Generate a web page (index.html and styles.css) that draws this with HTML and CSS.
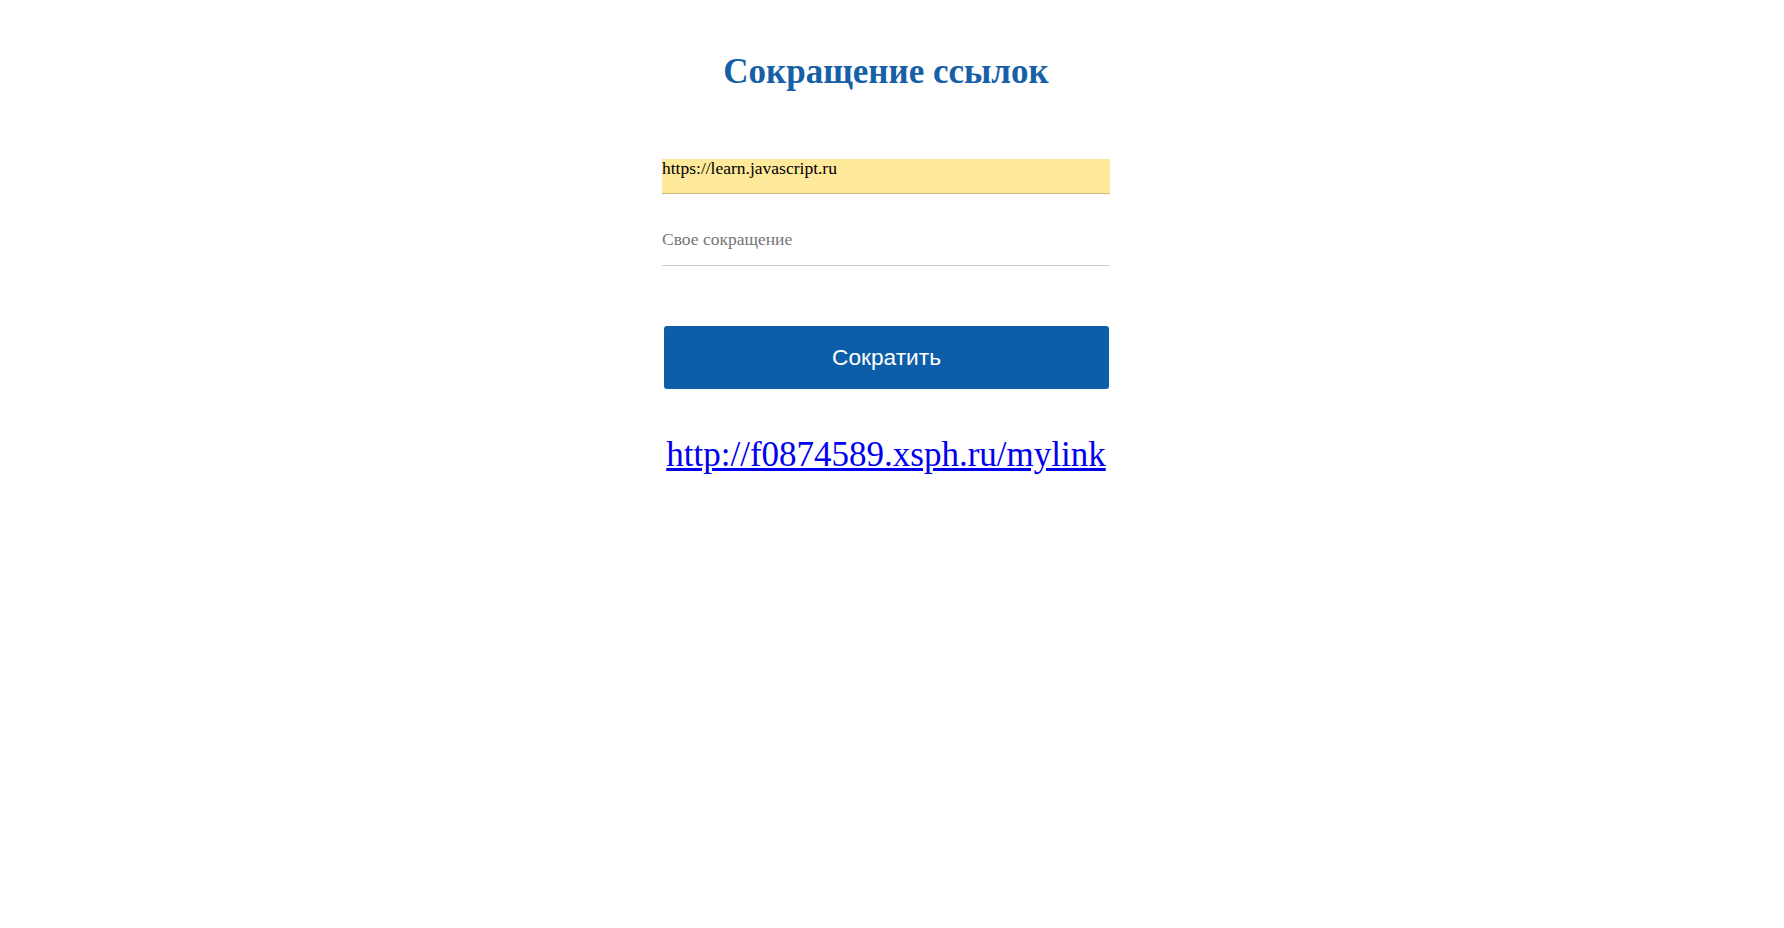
FILE: index.html
```html
<!DOCTYPE html>
<html lang="ru">
<head>
<meta charset="utf-8">
<title>Сокращение ссылок</title>
<link rel="stylesheet" href="styles.css">
</head>
<body>
<div class="page">
  <main class="wrap">
    <h1 class="title">Сокращение ссылок</h1>
    <form class="form">
      <input class="field field-url" type="text" value="https://learn.javascript.ru">
      <input class="field field-alias" type="text" placeholder="Свое сокращение">
      <button class="btn" type="button">Сократить</button>
    </form>
    <div class="result"><a class="result-link" href="#">http://f0874589.xsph.ru/mylink</a></div>
  </main>
</div>
</body>
</html>
```
FILE: styles.css
```css
html, body {
  margin: 0;
  padding: 0;
  background: #ffffff;
}
.page {
  display: flex;
  justify-content: center;
  padding-right: 12px;
  font-family: "Liberation Serif", "Times New Roman", serif;
}
.wrap {
  width: 448px;
  display: flex;
  flex-direction: column;
  align-items: stretch;
}
.title {
  margin: 48px 0 0 0;
  font-size: 35px;
  line-height: 48px;
  font-weight: bold;
  color: #1660a8;
  text-align: center;
  white-space: nowrap;
}
.form {
  display: flex;
  flex-direction: column;
  margin-top: 63px;
}
.field {
  box-sizing: border-box;
  width: 448px;
  margin: 0;
  border: none;
  outline: none;
  font-family: "Liberation Serif", "Times New Roman", serif;
  font-size: 17.5px;
  color: #000;
}
.field-url {
  height: 35px;
  padding: 0 0 16px 0;
  background: #ffe99a;
  border-bottom: 1px solid #cbb97f;
}
.field-alias {
  margin-top: 25px;
  height: 47px;
  padding: 0 0 5px 0;
  background: #fff;
  border-bottom: 1px solid #cccccc;
}
.field-alias::placeholder {
  color: #757575;
}
.btn {
  margin: 60px 1px 0 2px;
  height: 63px;
  border: none;
  border-radius: 3px;
  background: #0d5ea9;
  color: #ffffff;
  font-family: "Liberation Sans", Arial, sans-serif;
  font-size: 22.7px;
}
.result {
  margin-top: 46px;
  text-align: center;
  white-space: nowrap;
}
.result-link {
  font-size: 35px;
  color: #0000ee;
  text-decoration: underline;
}
```
